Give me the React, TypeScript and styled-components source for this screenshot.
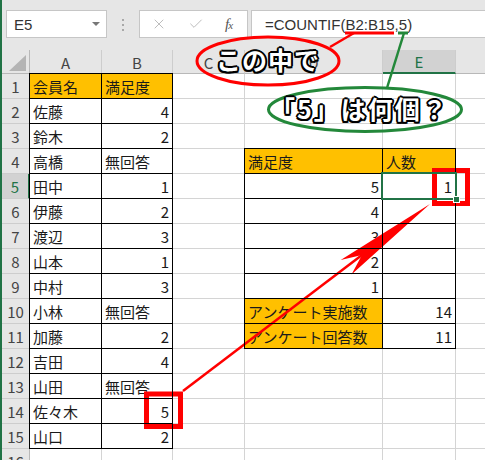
import { Fragment } from "react";
import styled, { createGlobalStyle } from "styled-components";
import { X, Check } from "lucide-react";

const GlobalStyle = createGlobalStyle`
  html, body {
    margin: 0;
    padding: 0;
    background: #fff;
  }
`;

const Screen = styled.div`
  position: relative;
  width: 485px;
  height: 460px;
  overflow: hidden;
  background: #fff;
  font-family: "Noto Sans CJK JP", "Noto Sans", sans-serif;
`;

const Workbook = styled.div`
  height: 100%;
  box-sizing: border-box;
  border-left: 2px solid #217346;
`;

const FormulaBar = styled.div`
  display: flex;
  align-items: flex-start;
  height: 50px;
  box-sizing: border-box;
  padding: 10px 0 0 4px;
  background: #e6e6e6;
`;

const NameBox = styled.div`
  display: flex;
  align-items: center;
  width: 101px;
  height: 28px;
  box-sizing: border-box;
  padding: 0 6px 0 7px;
  background: #fff;
  border: 1px solid #c6c6c6;
  font: 15px "Liberation Sans", Arial, sans-serif;
  color: #333;
`;

const DropArrow = styled.span`
  margin-left: auto;
  width: 0;
  height: 0;
  border-left: 4px solid transparent;
  border-right: 4px solid transparent;
  border-top: 4px solid #777;
`;

const Grip = styled.span`
  width: 2px;
  height: 12px;
  margin: 9px 15px 0 15px;
  background: linear-gradient(#a8a8a8 0 2px, transparent 2px) 0 0 / 2px 5px repeat-y;
`;

const ButtonBox = styled.div`
  display: flex;
  align-items: center;
  gap: 21px;
  width: 109px;
  height: 28px;
  box-sizing: border-box;
  padding-left: 11px;
  background: #fff;
  border: 1px solid #c6c6c6;
  color: #bdbdbd;
`;

const Fx = styled.span`
  font: italic 15px "Liberation Serif", serif;
  color: #555;
  letter-spacing: -1px;
  small {
    font-size: 11px;
  }
`;

const FormulaInput = styled.div`
  flex: 1;
  display: flex;
  align-items: center;
  height: 28px;
  margin-left: 3px;
  box-sizing: border-box;
  padding-left: 13px;
  background: #fff;
  border: 1px solid #c6c6c6;
  border-right: none;
  font: 15px "Liberation Sans", Arial, sans-serif;
  color: #333;
  white-space: nowrap;
`;

const Sheet = styled.div`
  display: grid;
  grid-template-columns: 28px 72px 71px 72px 138px 73px 120px;
  grid-template-rows: 24px;
  grid-auto-rows: 25px;
  font-size: 15px;
  line-height: 1;
`;

const Corner = styled.div`
  position: relative;
  background: #e6e6e6;
  border-right: 1px solid #b8b8b8;
  border-bottom: 1px solid #b8b8b8;

  &::after {
    content: "";
    position: absolute;
    right: 3px;
    bottom: 2px;
    width: 17px;
    height: 16px;
    background: #b4b4b4;
    clip-path: polygon(100% 0, 100% 100%, 0 100%);
  }
`;

const ColHeader = styled.div<{ $active?: boolean }>`
  display: flex;
  align-items: center;
  justify-content: center;
  box-sizing: border-box;
  background: ${(p) => (p.$active ? "#d2d2d2" : "#e6e6e6")};
  color: ${(p) => (p.$active ? "#217346" : "#444")};
  border-right: 1px solid #cdcdcd;
  border-bottom: ${(p) => (p.$active ? "2px solid #217346" : "1px solid #b8b8b8")};
  padding-top: 1px;
`;

const RowHeader = styled.div<{ $active?: boolean }>`
  display: flex;
  align-items: center;
  justify-content: center;
  box-sizing: border-box;
  background: ${(p) => (p.$active ? "#d2d2d2" : "#e6e6e6")};
  color: ${(p) => (p.$active ? "#217346" : "#444")};
  border-bottom: 1px solid #cdcdcd;
  border-right: ${(p) => (p.$active ? "2px solid #217346" : "1px solid #b8b8b8")};
`;

const Cell = styled.div<{ $fill?: boolean; $boxed?: boolean; $num?: boolean }>`
  position: relative;
  display: flex;
  align-items: center;
  justify-content: ${(p) => (p.$num ? "flex-end" : "flex-start")};
  box-sizing: border-box;
  padding: 1px 3px 0 3px;
  background: ${(p) => (p.$fill ? "#ffc000" : "#fff")};
  border-right: 1px solid #d4d4d4;
  border-bottom: 1px solid #d4d4d4;
  color: #1a1a1a;
  white-space: nowrap;

  ${(p) =>
    p.$boxed &&
    `
    &::after {
      content: "";
      position: absolute;
      inset: -1px;
      border: 1px solid #000;
      pointer-events: none;
      z-index: 1;
    }
  `}
`;

const SelectionFrame = styled.span`
  position: absolute;
  inset: -2px;
  border: 2px solid #217346;
  z-index: 2;
`;

const FillHandle = styled.span`
  position: absolute;
  right: -5px;
  bottom: -5px;
  width: 5px;
  height: 5px;
  background: #217346;
  border: 1px solid #fff;
`;

const Overlay = styled.svg`
  position: absolute;
  left: 0;
  top: 0;
  pointer-events: none;
`;

const Callout = styled.span<{ $left: number; $top: number; $spacing: number }>`
  position: absolute;
  left: ${(p) => p.$left}px;
  top: ${(p) => p.$top}px;
  font: 700 25px/1 "Noto Sans CJK JP", sans-serif;
  letter-spacing: ${(p) => p.$spacing}px;
  color: #fff;
  white-space: nowrap;
  text-shadow:
    2px 0 0 #000, -2px 0 0 #000, 0 2px 0 #000, 0 -2px 0 #000,
    1.5px 1.5px 0 #000, -1.5px 1.5px 0 #000, 1.5px -1.5px 0 #000, -1.5px -1.5px 0 #000;
`;

type CellData = { t?: string; num?: boolean; fill?: boolean; boxed?: boolean; sel?: boolean };

const E: CellData = {};
const b = (t: string, extra: Partial<CellData> = {}): CellData => ({
  t,
  boxed: true,
  num: /^\d+$/.test(t),
  ...extra,
});
const y = (t: string) => b(t, { fill: true });

const columns = ["A", "B", "C", "D", "E", "F"];

const rows: CellData[][] = [
  [y("会員名"), y("満足度"), E, E, E, E],
  [b("佐藤"), b("4"), E, E, E, E],
  [b("鈴木"), b("2"), E, E, E, E],
  [b("高橋"), b("無回答"), E, y("満足度"), y("人数"), E],
  [b("田中"), b("1"), E, b("5"), b("1", { sel: true }), E],
  [b("伊藤"), b("2"), E, b("4"), b(""), E],
  [b("渡辺"), b("3"), E, b("3"), b(""), E],
  [b("山本"), b("1"), E, b("2"), b(""), E],
  [b("中村"), b("3"), E, b("1"), b(""), E],
  [b("小林"), b("無回答"), E, y("アンケート実施数"), b("14"), E],
  [b("加藤"), b("2"), E, y("アンケート回答数"), b("11"), E],
  [b("吉田"), b("4"), E, E, E, E],
  [b("山田"), b("無回答"), E, E, E, E],
  [b("佐々木"), b("5"), E, E, E, E],
  [b("山口"), b("2"), E, E, E, E],
  [E, E, E, E, E, E],
];

const RED = "#ff0000";
const GREEN = "#23883a";

export default function App() {
  return (
    <Screen>
      <GlobalStyle />
      <Workbook>
        <FormulaBar>
          <NameBox>
            E5
            <DropArrow />
          </NameBox>
          <Grip />
          <ButtonBox>
            <X size={16} strokeWidth={1.5} />
            <Check size={16} strokeWidth={1.5} />
            <Fx>
              f<small>x</small>
            </Fx>
          </ButtonBox>
          <FormulaInput>=COUNTIF(B2:B15,5)</FormulaInput>
        </FormulaBar>

        <Sheet>
          <Corner />
          {columns.map((c) => (
            <ColHeader key={c} $active={c === "E"}>
              {c}
            </ColHeader>
          ))}
          {rows.map((row, r) => (
            <Fragment key={r}>
              <RowHeader $active={r === 4}>{r + 1}</RowHeader>
              {row.map((cell, c) => (
                <Cell key={c} $fill={cell.fill} $boxed={cell.boxed} $num={cell.num}>
                  {cell.t}
                  {cell.sel && (
                    <SelectionFrame>
                      <FillHandle />
                    </SelectionFrame>
                  )}
                </Cell>
              ))}
            </Fragment>
          ))}
        </Sheet>
      </Workbook>

      <Overlay width={485} height={460} viewBox="0 0 485 460">
        <ellipse cx={268} cy={61} rx={71} ry={24} fill="none" stroke={RED} strokeWidth={3} />
        <line x1={330} y1={47} x2={354} y2={33} stroke={RED} strokeWidth={2.5} />
        <line x1={345} y1={33} x2={394} y2={33} stroke={RED} strokeWidth={3} />

        <ellipse cx={365} cy={109.5} rx={96.5} ry={22} fill="none" stroke={GREEN} strokeWidth={3} />
        <line x1={398} y1={33} x2={408} y2={33} stroke={GREEN} strokeWidth={3} />
        <line x1={404} y1={33} x2={387} y2={88} stroke={GREEN} strokeWidth={2.5} />

        <rect x={434.5} y={170.5} width={33} height={33} fill="none" stroke={RED} strokeWidth={5} />
        <rect x={146.5} y={394} width={34} height={32.5} fill="none" stroke={RED} strokeWidth={5} />

        <line x1={183} y1={391} x2={362} y2={255} stroke={RED} strokeWidth={2.5} />
        <polygon points="430,204 351.5,274.4 362,255 340.7,260" fill={RED} />
      </Overlay>

      <Callout $left={216} $top={47} $spacing={1}>
        この中で
      </Callout>
      <Callout $left={270} $top={96} $spacing={2}>
        「5」は何個？
      </Callout>
    </Screen>
  );
}
